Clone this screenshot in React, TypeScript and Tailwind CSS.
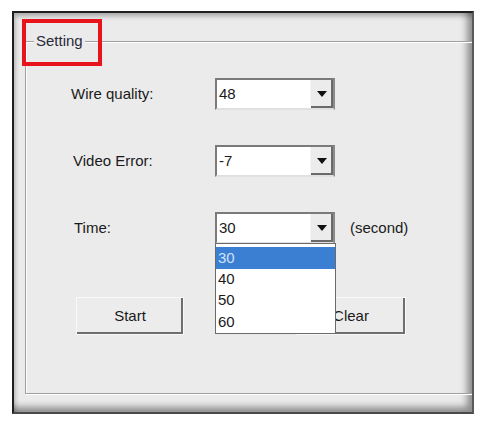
const font = { fontFamily: '"Liberation Sans", Arial, sans-serif' };

function Combo({ value }: { value: string }) {
  return (
    <div className="flex h-[32px] w-[120px] border-2 border-t-[#7a7a7a] border-l-[#7a7a7a] border-r-[#8a8a8a] border-b-[#e0e0e0] bg-white">
      <div className="flex flex-1 items-center pl-[2px] text-[15px] text-[#1a1a1a]">{value}</div>
      <div className="flex w-[23px] items-center justify-center border-l border-[#f5f5f5] bg-[#ececec] shadow-[inset_-2px_-2px_0_#6a6a6a]">
        <svg width="10" height="6" viewBox="0 0 10 6">
          <path d="M0 0h10L5 6z" fill="#111" />
        </svg>
      </div>
    </div>
  );
}

function Button({ label, className = "" }: { label: string; className?: string }) {
  return (
    <div
      className={`flex h-[38px] items-center justify-center border border-[#f8f8f8] bg-[#ececec] text-[15px] text-[#1a1a1a] shadow-[inset_-2px_-2px_0_#6e6e6e] ${className}`}
    >
      {label}
    </div>
  );
}

export default function App() {
  const rows = [
    { label: "Wire quality:", value: "48", pl: "pl-[45px]" },
    { label: "Video Error:", value: "-7", pl: "pl-[47px]" },
    { label: "Time:", value: "30", pl: "pl-[48px]" },
  ];

  return (
    <div className="relative h-[427px] w-[485px] bg-white pl-[12px] pt-[11px]" style={font}>
      <div className="h-[403px] w-[462px] overflow-hidden border-2 border-t-[#1e1e1e] border-l-[#1e1e1e] border-r-[#5a5a5a] border-b-[#4a4a4a] bg-[#ebebeb] pl-[11px] pt-[28px] shadow-[inset_-8px_-8px_7px_-3px_rgba(0,0,0,0.4),inset_3px_5px_5px_-2px_rgba(0,0,0,0.3)]">
        <div className="relative h-[353px] w-[470px] border border-[#a0a0a0] shadow-[inset_1px_1px_0_#ffffff,1px_1px_0_#ffffff]">
          <span className="absolute -top-[10px] left-[8px] bg-[#ebebeb] px-[2px] text-[15px] leading-[18px] text-[#2a2a3a]">
            Setting
          </span>

          <div className="flex flex-col gap-[35px] pt-[36px]">
            {rows.map((r) => (
              <div key={r.label} className="flex h-[32px] items-center">
                <div className={`w-[189px] text-[15px] text-[#1a1a1a] ${r.pl}`}>{r.label}</div>
                <Combo value={r.value} />
                {r.label === "Time:" && (
                  <span className="ml-[15px] text-[15px] text-[#1a1a1a]">(second)</span>
                )}
              </div>
            ))}
          </div>

          <div className="flex pl-[50px] pt-[53px]">
            <Button label="Start" className="w-[108px]" />
            <Button label="Clear" className="ml-[112px] w-[110px]" />
          </div>

          <div className="absolute left-[189px] top-[201px] w-[121px] border border-[#6b6b6b] bg-white pt-[3px] text-[15px] text-[#1a1a1a]">
            <div className="flex h-[22px] items-center bg-[#3b7fd3] pl-[2px] text-[#cfe2f8]">30</div>
            <div className="flex h-[21px] items-center pl-[2px]">40</div>
            <div className="flex h-[21px] items-center pl-[2px]">50</div>
            <div className="flex h-[22px] items-center pl-[2px]">60</div>
          </div>
        </div>
      </div>

      <div className="absolute left-[22px] top-[19px] h-[47px] w-[80px] border-4 border-[#e8141c]" />
    </div>
  );
}
